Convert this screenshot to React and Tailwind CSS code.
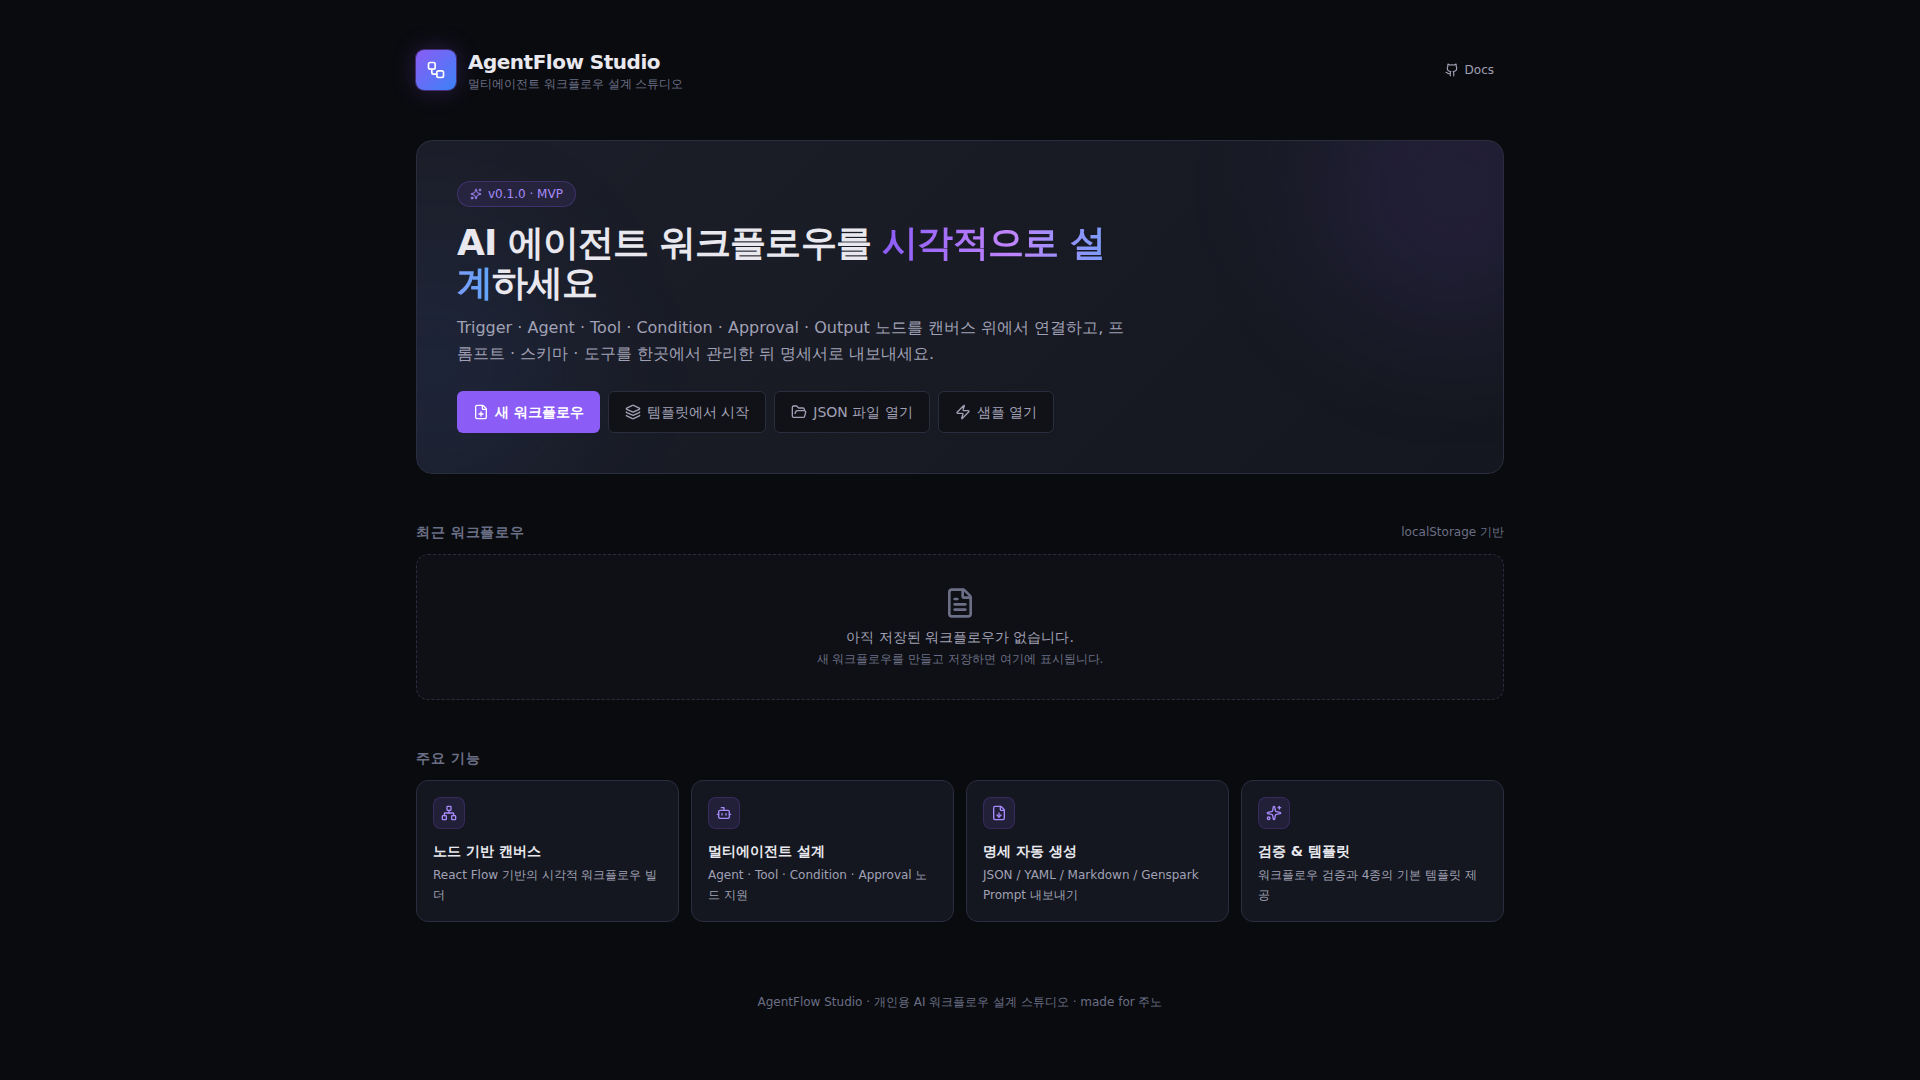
import {
    Bot,
    FileDown,
    FilePlus,
    FileText,
    FolderOpen,
    Github,
    Layers,
    Network,
    Sparkles,
    Workflow,
    Zap,
} from 'lucide-react';

const features = [
    { icon: Network, title: '노드 기반 캔버스', desc: 'React Flow 기반의 시각적 워크플로우 빌더' },
    { icon: Bot, title: '멀티에이전트 설계', desc: 'Agent · Tool · Condition · Approval 노드 지원' },
    { icon: FileDown, title: '명세 자동 생성', desc: 'JSON / YAML / Markdown / Genspark Prompt 내보내기' },
    { icon: Sparkles, title: '검증 & 템플릿', desc: '워크플로우 검증과 4종의 기본 템플릿 제공' },
];

const secondaryActions = [
    { icon: Layers, label: '템플릿에서 시작' },
    { icon: FolderOpen, label: 'JSON 파일 열기' },
    { icon: Zap, label: '샘플 열기' },
];

function Header() {
    return (
        <header className="mb-12 flex items-center justify-between">
            <div className="flex items-center gap-3">
                <div className="flex h-10 w-10 items-center justify-center rounded-lg bg-[linear-gradient(135deg,#8b5cf6,#3b82f6)] text-white shadow-[0_0_0_1px_rgba(139,92,246,0.4),0_0_24px_rgba(139,92,246,0.25)]">
                    <Workflow size={20} />
                </div>
                <div>
                    <h1 className="text-xl font-bold tracking-tight">AgentFlow Studio</h1>
                    <p className="text-xs text-[#6b6f85]">멀티에이전트 워크플로우 설계 스튜디오</p>
                </div>
            </div>
            <a href="#docs" className="flex items-center gap-1.5 rounded-md px-2.5 py-1.5 text-xs text-[#a1a1b5] hover:text-white">
                <Github size={14} />
                Docs
            </a>
        </header>
    );
}

function Hero() {
    return (
        <section className="relative mb-12 overflow-hidden rounded-2xl border border-[#2a2d3e] bg-[linear-gradient(135deg,#1c1e29,#14171f)] p-10">
            <div className="absolute -top-24 -right-24 h-72 w-72 rounded-full bg-[#8b5cf6]/10 blur-3xl" />
            <div className="absolute -bottom-10 -left-32 h-72 w-72 rounded-full bg-[#3b82f6]/8 blur-3xl" />

            <div className="relative">
                <span className="mb-4 flex w-fit items-center gap-1.5 rounded-full border border-[#8b5cf6]/25 bg-[#8b5cf6]/10 px-3 py-1 text-xs text-[#a78bfa]">
                    <Sparkles size={12} />
                    v0.1.0 · MVP
                </span>
                <h2 className="mb-3 max-w-2xl text-4xl font-bold tracking-tight">
                    AI 에이전트 워크플로우를{' '}
                    <span className="bg-[linear-gradient(90deg,#8b5cf6,#c084fc,#60a5fa)] bg-clip-text text-transparent">
                        시각적으로 설계
                    </span>
                    하세요
                </h2>
                <p className="mb-6 max-w-2xl text-base/[26px] text-[#a1a1b5]">
                    Trigger · Agent · Tool · Condition · Approval · Output 노드를 캔버스 위에서 연결하고,
                    프롬프트 · 스키마 · 도구를 한곳에서 관리한 뒤 명세서로 내보내세요.
                </p>

                <div className="flex flex-wrap gap-2">
                    <button
                        type="button"
                        className="flex items-center gap-1.5 rounded-md bg-[#8b5cf6] px-4 py-2.5 text-sm font-semibold text-white hover:bg-[#7c3aed]"
                    >
                        <FilePlus size={16} />
                        새 워크플로우
                    </button>
                    {secondaryActions.map(({ icon: Icon, label }) => (
                        <button
                            key={label}
                            type="button"
                            className="flex items-center gap-1.5 rounded-md border border-[#2a2d3e] bg-[#111218] px-4 py-2.5 text-sm text-[#a1a1b5] hover:text-white"
                        >
                            <Icon size={16} />
                            {label}
                        </button>
                    ))}
                </div>
            </div>
        </section>
    );
}

function RecentWorkflows() {
    return (
        <section className="mb-12">
            <div className="mb-3 flex items-center justify-between text-[#6b6f85]">
                <h3 className="text-sm font-semibold tracking-wider">최근 워크플로우</h3>
                <span className="text-xs">localStorage 기반</span>
            </div>
            <div className="flex flex-col items-center rounded-xl border border-dashed border-[#2a2d3e] bg-[#0f1015] px-4 py-8 text-center">
                <FileText size={32} className="mb-2 text-[#6b6f85]" />
                <p className="mb-1 text-sm text-[#a1a1b5]">아직 저장된 워크플로우가 없습니다.</p>
                <p className="text-xs text-[#6b6f85]">새 워크플로우를 만들고 저장하면 여기에 표시됩니다.</p>
            </div>
        </section>
    );
}

function Features() {
    return (
        <section>
            <h3 className="mb-3 text-sm font-semibold tracking-wider text-[#6b6f85]">주요 기능</h3>
            <div className="grid grid-cols-1 gap-3 md:grid-cols-2 lg:grid-cols-4">
                {features.map(({ icon: Icon, title, desc }) => (
                    <div key={title} className="rounded-xl border border-[#2a2d3e] bg-[#14171f] p-4">
                        <div className="mb-3 flex h-8 w-8 items-center justify-center rounded-lg border border-[#8b5cf6]/20 bg-[#8b5cf6]/12 text-[#a78bfa]">
                            <Icon size={16} />
                        </div>
                        <h4 className="mb-1 text-sm font-semibold">{title}</h4>
                        <p className="text-xs/5 text-[#a1a1b5]">{desc}</p>
                    </div>
                ))}
            </div>
        </section>
    );
}

export default function App() {
    return (
        <div className="min-h-screen bg-[#0a0b0f] font-['DejaVu_Sans',sans-serif] text-[#e8e8ee]">
            <div className="mx-auto max-w-6xl px-8 py-12">
                <Header />
                <Hero />
                <RecentWorkflows />
                <Features />
                <footer className="mt-18 text-center text-xs text-[#6b6f85]">
                    AgentFlow Studio · 개인용 AI 워크플로우 설계 스튜디오 · made for 주노
                </footer>
            </div>
        </div>
    );
}
